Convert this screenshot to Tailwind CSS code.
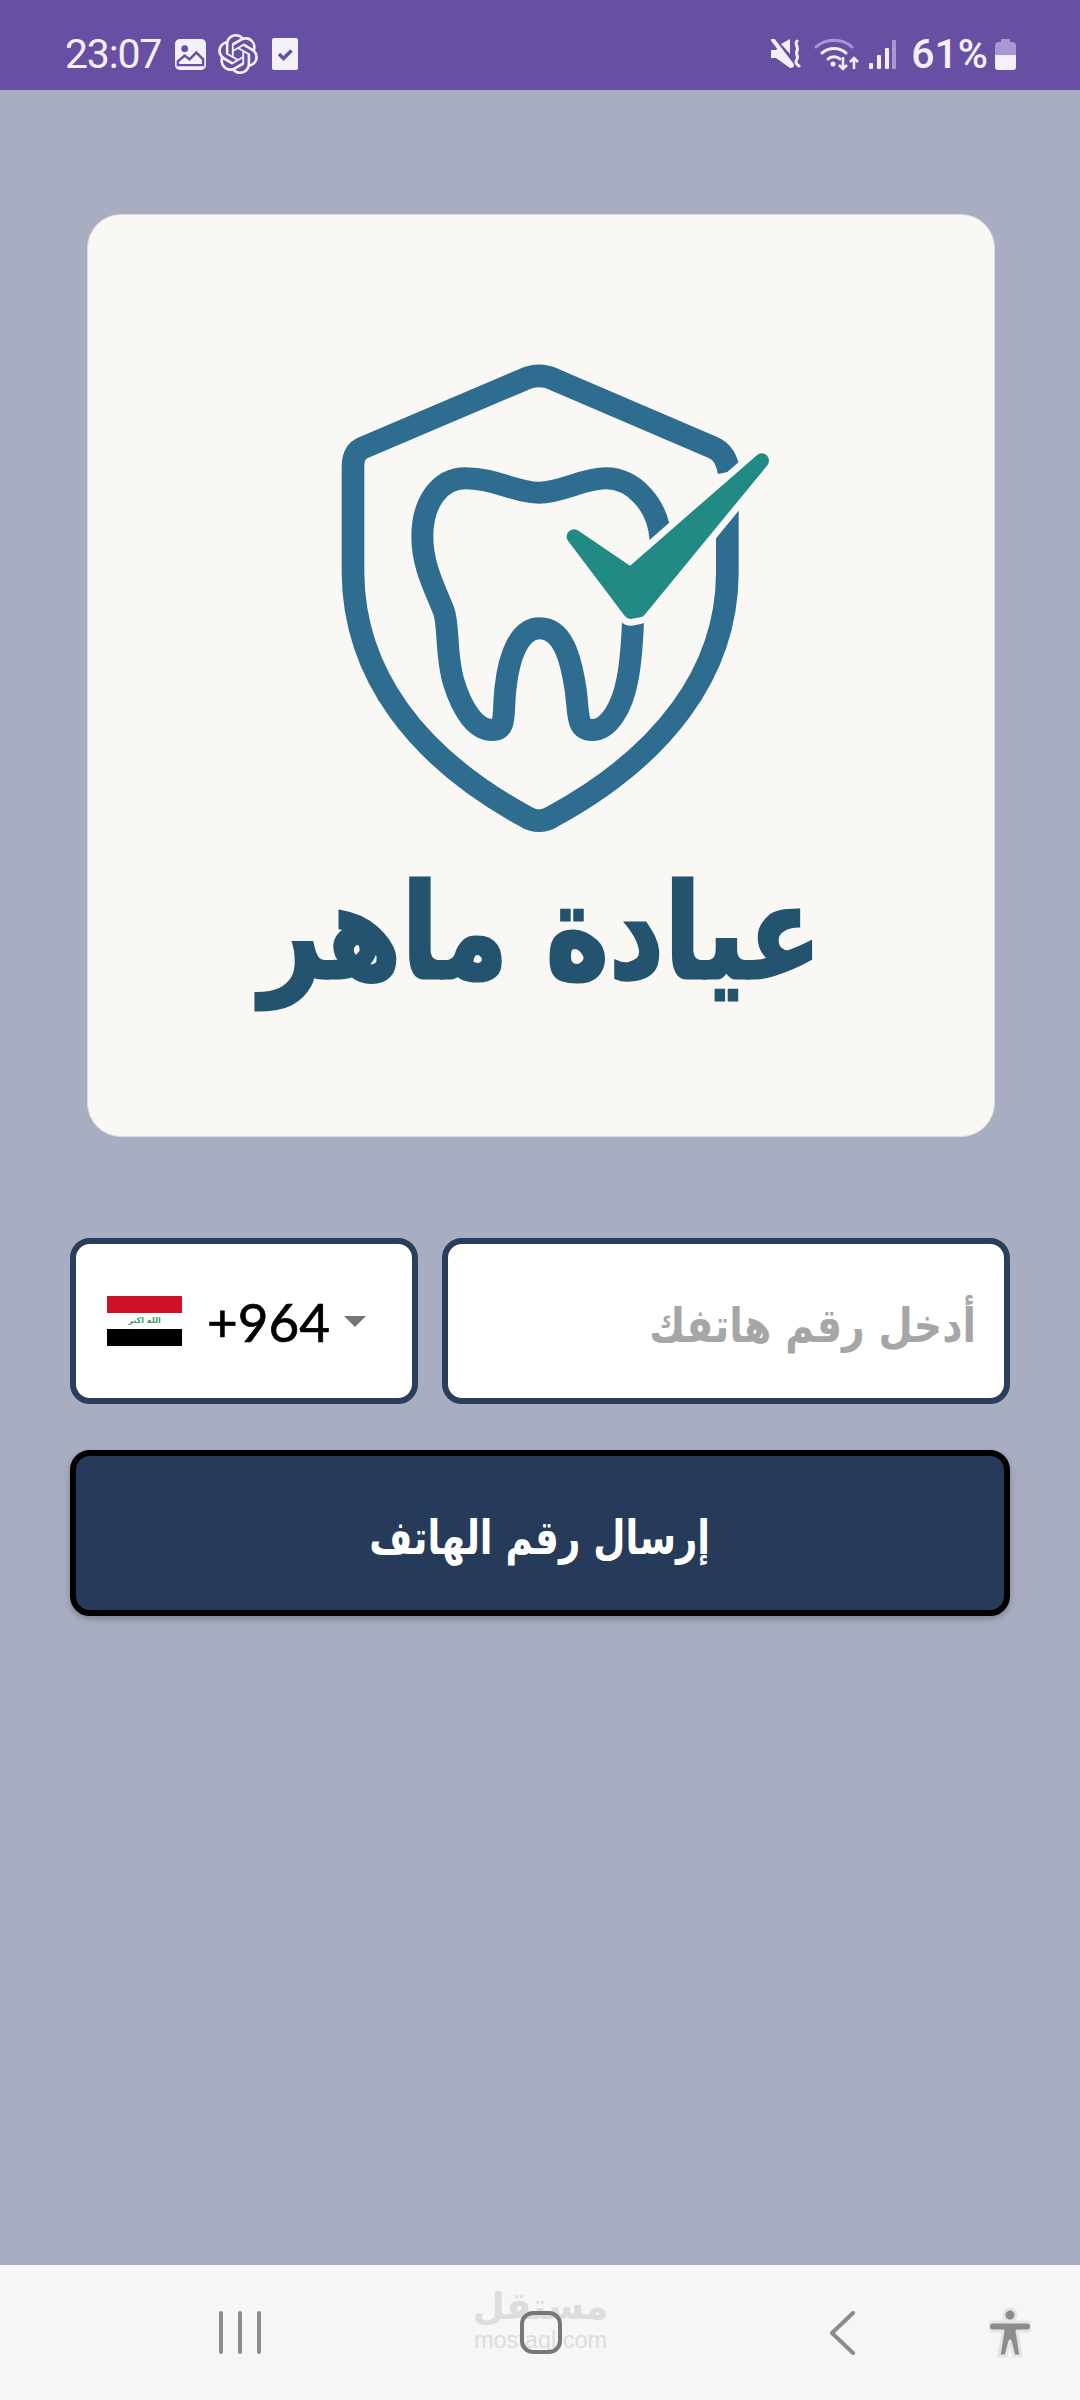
<!DOCTYPE html>
<html lang="ar">

<head>
  <meta charset="UTF-8">
  <meta name="viewport" content="width=device-width, initial-scale=1.0">
  <title>Login</title>
  <script src="https://cdn.jsdelivr.net/npm/@tailwindcss/browser@4"></script>
</head>

<body class="w-[1080px] h-[2400px] flex flex-col overflow-hidden bg-[#a9adc1] font-['DejaVu_Sans',sans-serif]">

  <!-- status bar -->
  <header class="h-[90px] bg-[#6750a4] flex items-center justify-between pl-[65px] pr-[64px] pt-[18px] text-[#f3f0fa]">
    <div class="flex items-center">
      <span class="font-['Roboto',sans-serif] text-[41px] leading-none tracking-[-1.2px]">23:07</span>
      <svg class="ml-[14px] w-[31px] h-[31px]" viewBox="0 0 32 32">
        <rect x="0" y="0" width="32" height="32" rx="5" fill="#f3f0fa" />
        <circle cx="10" cy="10" r="3.5" fill="#6750a4" />
        <path d="M3 27v-4l7-6 5 4 7-7 7 7v6z" fill="none" stroke="#6750a4" stroke-width="2.5" />
      </svg>
      <svg class="ml-[12px] w-[40px] h-[40px]" viewBox="0 0 24 24" fill="#f3f0fa">
        <path d="M22.2819 9.8211a5.9847 5.9847 0 0 0-.5157-4.9108 6.0462 6.0462 0 0 0-6.5098-2.9A6.0651 6.0651 0 0 0 4.9807 4.1818a5.9847 5.9847 0 0 0-3.9977 2.9 6.0462 6.0462 0 0 0 .7427 7.0966 5.98 5.98 0 0 0 .511 4.9107 6.051 6.051 0 0 0 6.5146 2.9001A5.9847 5.9847 0 0 0 13.2599 24a6.0557 6.0557 0 0 0 5.7718-4.2058 5.9894 5.9894 0 0 0 3.9977-2.9001 6.0557 6.0557 0 0 0-.7475-7.0729zm-9.022 12.6081a4.4755 4.4755 0 0 1-2.8764-1.0408l.1419-.0804 4.7783-2.7582a.7948.7948 0 0 0 .3927-.6813v-6.7369l2.02 1.1686a.071.071 0 0 1 .038.052v5.5826a4.504 4.504 0 0 1-4.4945 4.4944zm-9.6607-4.1254a4.4708 4.4708 0 0 1-.5346-3.0137l.142.0852 4.783 2.7582a.7712.7712 0 0 0 .7806 0l5.8428-3.3685v2.3324a.0804.0804 0 0 1-.0332.0615L9.74 19.9502a4.4992 4.4992 0 0 1-6.1408-1.6464zM2.3408 7.8956a4.485 4.485 0 0 1 2.3655-1.9728V11.6a.7664.7664 0 0 0 .3879.6765l5.8144 3.3543-2.0201 1.1685a.0757.0757 0 0 1-.071 0l-4.8303-2.7865A4.504 4.504 0 0 1 2.3408 7.872zm16.5963 3.8558L13.1038 8.364 15.1192 7.2a.0757.0757 0 0 1 .071 0l4.8303 2.7913a4.4944 4.4944 0 0 1-.6765 8.1042v-5.6772a.79.79 0 0 0-.407-.667zm2.0107-3.0231l-.142-.0852-4.7735-2.7818a.7759.7759 0 0 0-.7854 0L9.409 9.2297V6.8974a.0662.0662 0 0 1 .0284-.0615l4.8303-2.7866a4.4992 4.4992 0 0 1 6.6802 4.66zM8.3065 12.863l-2.02-1.1638a.0804.0804 0 0 1-.038-.0567V6.0742a4.4992 4.4992 0 0 1 7.3757-3.4537l-.142.0805L8.704 5.459a.7948.7948 0 0 0-.3927.6813zm1.0976-2.3654l2.602-1.4998 2.6069 1.4998v2.9994l-2.5974 1.4997-2.6067-1.4997Z" />
      </svg>
      <svg class="ml-[14px] w-[26px] h-[32px]" viewBox="0 0 26 32">
        <rect width="26" height="32" rx="2" fill="#f3f0fa" />
        <path d="M7 16l4.500 4.500 8-8" fill="none" stroke="#6750a4" stroke-width="3.500" />
      </svg>
    </div>
    <div class="flex items-center">
      <svg class="w-[30px] h-[30px]" viewBox="0 0 30 30">
        <path d="M0 11h5l3-3 15 20-4 1-14-10H0z" fill="#f3f0fa" />
        <path d="M10 5l9-5v15z" fill="#f3f0fa" />
        <path d="M2 1l19 25" stroke="#f3f0fa" stroke-width="4" stroke-linecap="round" />
        <path d="M26 2c-3 3 2 6 0 10s2 5 0 8-1 5 2 7" fill="none" stroke="#f3f0fa" stroke-width="3" stroke-linecap="round" />
      </svg>
      <svg class="ml-[13px] w-[47px] h-[33px]" viewBox="0 0 47 33" fill="none">
        <path d="M2 9c10-9 26-9 36 0" stroke="#a997d3" stroke-width="3" stroke-linecap="round" />
        <path d="M8 15c7-6 17-6 24 0" stroke="#f3f0fa" stroke-width="3" stroke-linecap="round" />
        <path d="M14 21c3-3 9-3 12 0" stroke="#f3f0fa" stroke-width="3" stroke-linecap="round" />
        <circle cx="19" cy="26" r="2.500" fill="#f3f0fa" />
        <path d="M29 19v12M25 27l4 4 4-4M40 31V20M36 24l4-4 4 4" stroke="#f3f0fa" stroke-width="2.500" />
      </svg>
      <svg class="ml-[8px] w-[27px] h-[29px]" viewBox="0 0 27 29">
        <rect x="0" y="23" width="4" height="6" rx="1" fill="#f3f0fa" />
        <rect x="8" y="15" width="4" height="14" rx="1" fill="#f3f0fa" />
        <rect x="16" y="8" width="4" height="21" rx="1" fill="#f3f0fa" />
        <rect x="23" y="0" width="4" height="29" rx="1" fill="#a997d3" />
      </svg>
      <span class="ml-[15px] font-['Roboto',sans-serif] font-medium text-[41px] leading-none">61%</span>
      <svg class="ml-[7px] w-[21px] h-[31px]" viewBox="0 0 21 31">
        <path d="M6 0h9v3h2a4 4 0 0 1 4 4v9H0V7a4 4 0 0 1 4-4h2z" fill="#a997d3" />
        <path d="M0 16h21v12a3 3 0 0 1-3 3H3a3 3 0 0 1-3-3z" fill="#f3f0fa" />
      </svg>
    </div>
  </header>

  <main class="flex-1 flex flex-col px-[70px]">

    <!-- logo card -->
    <div class="ml-[17px] mr-[15px] mt-[124px] h-[923px] rounded-[34px] bg-[#f9f8f4] border border-[#d9dae2] flex flex-col items-center pt-[125px]">
      <svg class="ml-[16px] w-[500px] h-[520px] shrink-0" viewBox="0 0 1500 1560" fill="none">
        <path d="M1290 395C1283 360 1272 335 1240 322L765 118C735 104 705 104 675 118L195 322C170 332 162 350 162 380V700C165 1000 350 1250 680 1430C705 1446 735 1446 760 1430C1090 1250 1283 1000 1285 700V500" stroke="#2f6d90" stroke-width="68" />
        <path d="M1085 600C1078 490 1000 415 920 415C850 415 790 458 720 458C650 458 590 415 500 415C420 415 370 490 370 590C370 680 410 750 435 815C450 860 440 950 465 1030C490 1110 530 1170 580 1170C625 1170 610 1120 620 1040C630 950 660 865 722 865C790 865 815 950 830 1050C840 1120 830 1170 880 1170C930 1170 970 1100 985 1020C997 960 1000 910 1003 820" stroke="#2f6d90" stroke-width="66" />
        <path d="M825 590L995 705L1388 362L1020 810L995 815Z" stroke="#f9f8f4" stroke-width="84" stroke-linejoin="round" />
        <path d="M825 590L995 705L1388 362L1020 810L995 815Z" fill="#228a84" stroke="#228a84" stroke-width="44" stroke-linejoin="round" />
      </svg>
      <p dir="rtl" class="mt-[11px] text-[122px] leading-[125px] font-bold text-[#23536f] whitespace-nowrap scale-x-[0.88] scale-y-[1.08] [-webkit-text-stroke:3px_#23536f]">عيادة ماهر</p>
    </div>

    <!-- phone inputs -->
    <div class="mt-[101px] flex gap-[24px] h-[166px]">
      <div class="w-[348px] rounded-[20px] border-[6px] border-[#2b3d5c] bg-white flex items-center pl-[31px]">
        <div class="w-[75px] h-[50px] flex flex-col">
          <div class="h-1/3 bg-[#ce1126]"></div>
          <div dir="rtl" class="h-1/3 bg-white flex items-center justify-center text-[8px] leading-none font-bold text-[#3f9b64]">الله اكبر</div>
          <div class="h-1/3 bg-black"></div>
        </div>
        <span class="ml-[25px] font-['Lato',sans-serif] text-[53px] leading-none text-black [-webkit-text-stroke:0.7px_black]">+964</span>
        <div class="ml-[14px] w-0 h-0 border-x-[11px] border-x-transparent border-t-[11px] border-t-[#757575]"></div>
      </div>
      <div dir="rtl" class="flex-1 rounded-[20px] border-[6px] border-[#2b3d5c] bg-white flex items-center pr-[28px] pt-[8px]">
        <span class="inline-block origin-right scale-x-[0.84] text-[47px] leading-none font-bold text-[#a6a6a6] whitespace-nowrap">أدخل رقم هاتفك</span>
      </div>
    </div>

    <button dir="rtl" class="mt-[46px] h-[166px] rounded-[20px] border-[6px] border-black bg-[#263a5a] shadow-[0_3px_6px_rgba(0,0,0,0.25)] text-white pt-[8px]">
      <span class="inline-block scale-x-[0.79] text-[47px] leading-none font-bold whitespace-nowrap">إرسال رقم الهاتف</span>
    </button>
  </main>

  <!-- navigation bar -->
  <nav class="relative h-[135px] bg-[#f6f6f6] flex items-center">
    <div class="ml-[219px] flex gap-[15px]">
      <div class="w-[4px] h-[43px] rounded-full bg-[#8c8c8c]"></div>
      <div class="w-[4px] h-[43px] rounded-full bg-[#8c8c8c]"></div>
      <div class="w-[4px] h-[43px] rounded-full bg-[#8c8c8c]"></div>
    </div>
    <div class="absolute left-[475px] top-[20px] w-[131px] flex flex-col items-center text-[#dddddd]">
      <span dir="rtl" class="text-[37px] leading-[44px] font-bold whitespace-nowrap">مستقل</span>
      <span class="font-['Liberation_Sans',sans-serif] text-[23.500px] leading-[22px]">mostaql.com</span>
    </div>
    <div class="relative ml-[259px] w-[42px] h-[43px] rounded-[13px] border-[4px] border-[#777777]"></div>
    <svg class="ml-[268px] w-[25px] h-[44px]" viewBox="0 0 25 44" fill="none">
      <path d="M23 2L2 22l21 20" stroke="#8c8c8c" stroke-width="4" stroke-linecap="round" stroke-linejoin="round" />
    </svg>
    <svg class="ml-[134px] w-[42px] h-[50px]" viewBox="0 0 42 50">
      <g stroke="#e4e4e4" stroke-width="3" stroke-linejoin="round" fill="#8c8c8c">
        <circle cx="21" cy="7" r="6" />
        <path d="M4 14h34a4 4 0 0 1 0 9H28l4 25h-7l-4-15-4 15h-7l4-25H4a4 4 0 0 1 0-9z" />
      </g>
    </svg>
  </nav>

</body>

</html>
